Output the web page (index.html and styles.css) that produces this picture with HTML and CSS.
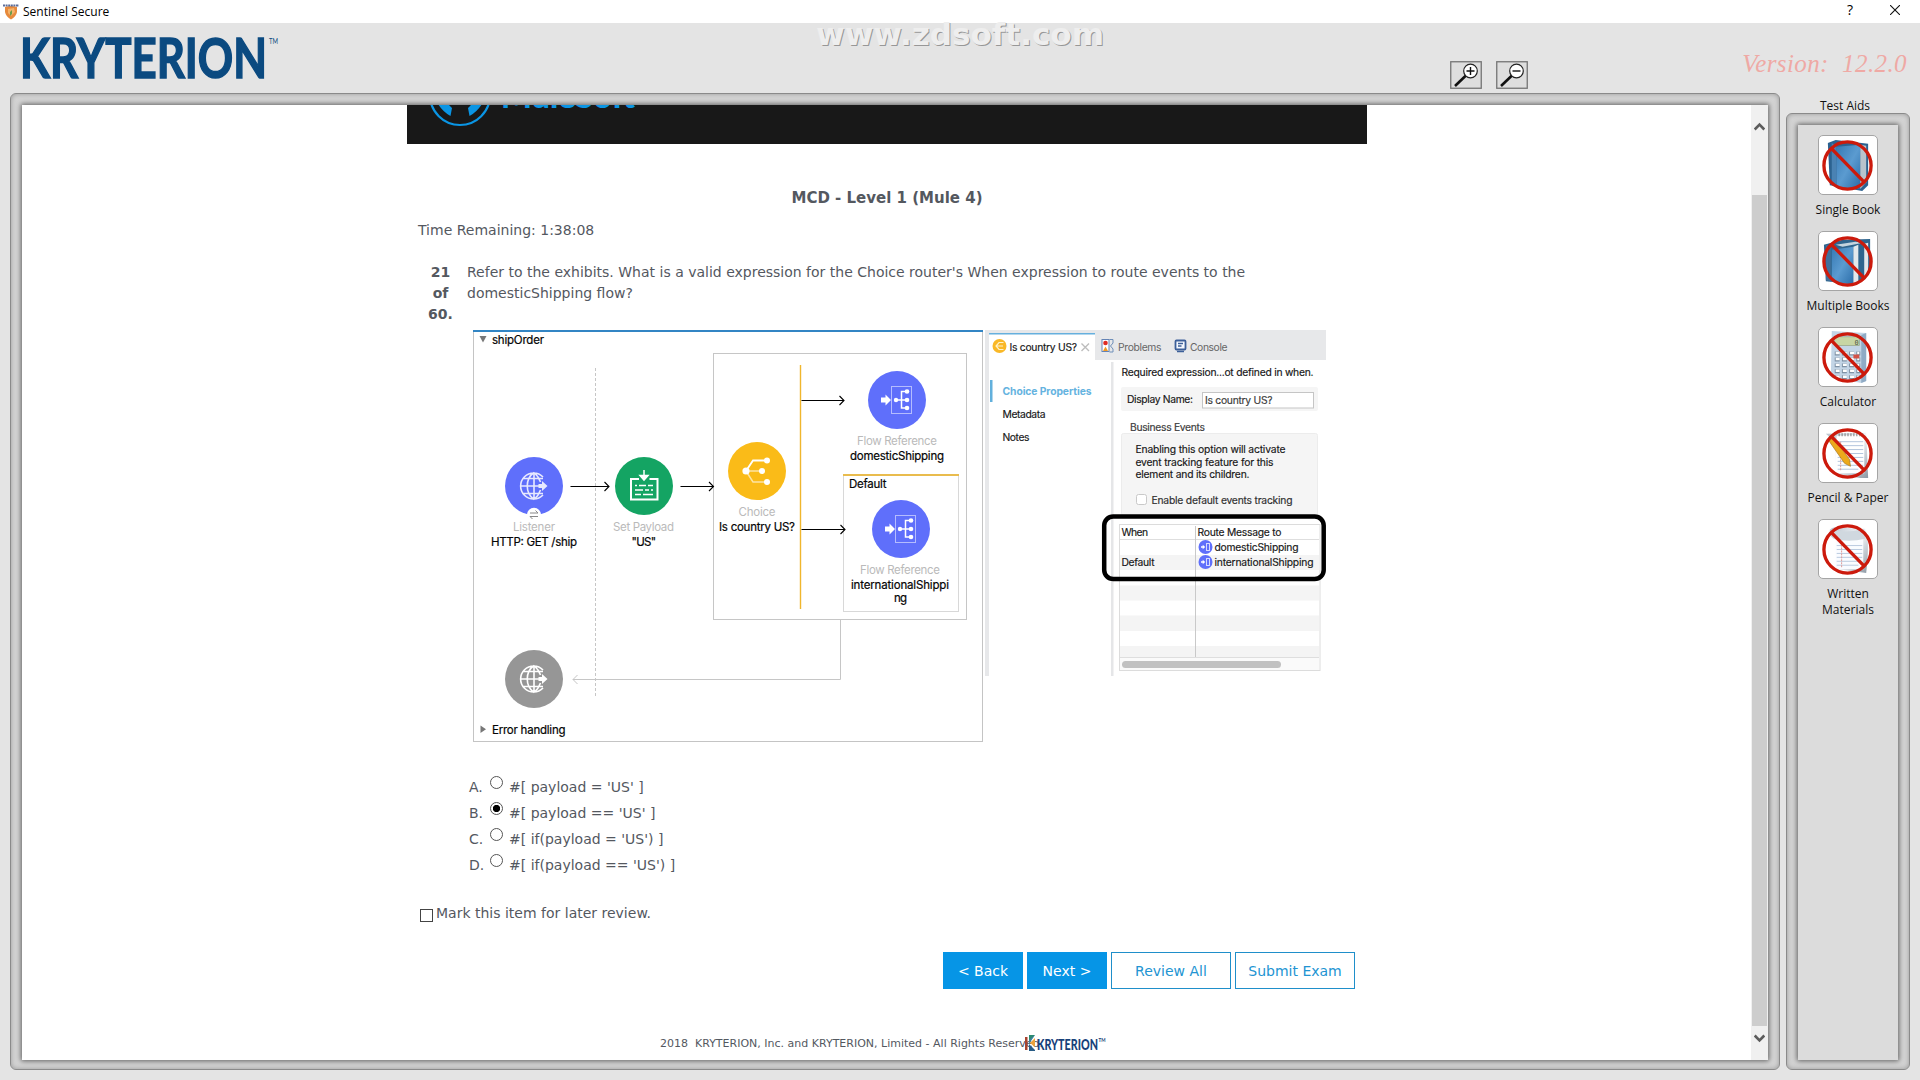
FILE: index.html
```html
<!DOCTYPE html>
<html lang="en">
<head>
<meta charset="utf-8">
<title>Sentinel Secure</title>
<link rel="stylesheet" href="styles.css">
</head>
<body>
<svg width="0" height="0" class="defs" aria-hidden="true">
  <defs>
    <linearGradient id="blue" x1="0" y1="0" x2="1" y2="1"><stop offset="0" stop-color="#3679b4"/><stop offset=".5" stop-color="#5b9bd0"/><stop offset="1" stop-color="#2a6ca8"/></linearGradient>
    <linearGradient id="paper" x1="0" y1="0" x2="1" y2="1"><stop offset="0" stop-color="#b9c3cd"/><stop offset=".5" stop-color="#f4f7fa"/><stop offset="1" stop-color="#8c98a3"/></linearGradient>
    <g id="ban" fill="none" stroke="#cc1a0c" stroke-width="3.4"><circle cx="29" cy="30" r="24"/><path d="M12 12L46.500 47.500"/></g>
    <g id="globe" fill="none" stroke="#fff" stroke-width="1.6">
      <path d="M10 -9A13 13 0 1 0 10 9M1 -13.500V13.500M-12.500 0H8M-10 -7.500H10M-10 7.500H10M1 -13.500C-8 -7 -8 7 1 13.500M1 -13.500C5 -10 6.500 -7 7.500 -4M1 13.500C5 10 6.500 7 7.500 4"/>
      <path d="M5.500 -2H9V-5L14.500 0L9 5V2H5.500Z" fill="#fff" stroke="none"/>
    </g>
    <g id="flowref">
      <circle r="29" fill="#5f6ffb"/>
      <path d="M-16 -2.500H-11.500V-5.500L-6 0L-11.500 5.500V2.500H-16Z" fill="#fff"/>
      <rect x="-5.500" y="-13.500" width="20" height="27" fill="none" stroke="#b4bcfe"/>
      <path d="M-1 0H10M10 -8.500H4.500V8H10" fill="none" stroke="#fff" stroke-width="1.500"/>
      <g fill="#fff"><circle cx="-1" r="2.200"/><circle cx="10" r="2.300"/><circle cx="10" cy="-8.500" r="2.300"/><circle cx="10" cy="8" r="2.300"/></g>
    </g>
    <g id="routeicon"><circle r="7" fill="#5f6ffb"/><path d="M-4.500 -.7H-2.800V-2.300L-.3 0L-2.800 2.300V.7H-4.500Z" fill="#fff"/><rect x="1" y="-3.500" width="3" height="7" fill="none" stroke="#d5d9ff"/></g>
    <path id="head" d="M-4.500 -4.500L0 0L-4.500 4.500" fill="none"/>
  </defs>
</svg>

<header class="titlebar">
  <svg class="shield" width="16" height="16" viewBox="0 0 16 16"><path d="M2 3Q8 1 14 3V8Q13 13 8 15.500Q3 13 2 8Z" fill="#e78a3c"/><path d="M5 5L11 4L12 8L8 12L5 9Z" fill="#f4b36a"/><path d="M7 8L9 6V10L7 12Z" fill="#6c9b4a"/><path d="M0 1.500H16" stroke="#5b6d99" stroke-width="2" stroke-dasharray="2 .6"/></svg>
  <span class="app-name">Sentinel Secure</span>
  <span class="help">?</span>
  <svg class="close" width="10" height="10" viewBox="0 0 10 10"><path d="M0 0L10 10M10 0L0 10" stroke="#111" stroke-width="1.100"/></svg>
</header>

<div class="brandbar">
  <svg class="brand" width="260" height="46" viewBox="0 0 260 46"><text x="-2" y="43" font-family="Lato, sans-serif" font-weight="700" font-size="55" textLength="247" lengthAdjust="spacingAndGlyphs" fill="#0b4a80" stroke="#0b4a80" stroke-width="1.500">KRYTERION</text><text x="247" y="8.500" font-family="Lato, sans-serif" font-size="7" textLength="9" lengthAdjust="spacingAndGlyphs" fill="#0b4a80">TM</text></svg>
  <svg class="watermark" width="300" height="40" viewBox="0 0 300 40"><g font-family="DejaVu Sans, sans-serif" font-weight="700" font-size="30"><text x="7" y="33" textLength="288" lengthAdjust="spacingAndGlyphs" fill="#979797">www.zdsoft.com</text><text x="6" y="32" textLength="288" lengthAdjust="spacingAndGlyphs" fill="#eeeeee">www.zdsoft.com</text></g></svg>
  <div class="zooms">
    <svg class="zoom" width="32" height="28" viewBox="0 0 32 28"><rect x=".75" y=".75" width="30.500" height="26.500" fill="#dedede" stroke="#747474" stroke-width="1.300"/><path d="M5 25L16.500 14" stroke="#111" stroke-width="2.600"/><circle cx="20.500" cy="10" r="6.800" fill="#fff" stroke="#222" stroke-width="1.200"/><path d="M16.500 10H24.500M20.500 6V14" stroke="#111" stroke-width="1.400"/></svg>
    <svg class="zoom" width="32" height="28" viewBox="0 0 32 28"><rect x=".75" y=".75" width="30.500" height="26.500" fill="#dedede" stroke="#747474" stroke-width="1.300"/><path d="M5 25L16.500 14" stroke="#111" stroke-width="2.600"/><circle cx="20.500" cy="10" r="6.800" fill="#fff" stroke="#222" stroke-width="1.200"/><path d="M16.500 10H24.500" stroke="#111" stroke-width="1.400"/></svg>
  </div>
  <div class="version">Version:&nbsp; 12.2.0</div>
</div>

<div class="workspace">
  <main class="frame exam">
    <div class="viewport">
      <div class="page">
        <div class="banner">
          <svg width="240" height="39" viewBox="407 105 240 39"><circle cx="460" cy="95" r="30" fill="none" stroke="#0a95e4" stroke-width="2.200"/><path d="M438 104Q443 112 450.500 116L452 108L447 103ZM482 104Q477 112 469.500 116L468 108L473 103Z" fill="#0a95e4"/><text x="501" y="108" font-family="Lato, sans-serif" font-weight="900" font-size="31" textLength="134" lengthAdjust="spacingAndGlyphs" fill="#0a95e4">MuleSoft</text></svg>
        </div>
        <h1 class="exam-title">MCD - Level 1 (Mule 4)</h1>
        <div class="timer">Time Remaining: 1:38:08</div>
        <section class="question">
          <div class="number">21<br>of<br>60.</div>
          <p class="prompt">Refer to the exhibits. What is a valid expression for the Choice router's When expression to route events to the domesticShipping flow?</p>
        </section>

        <svg class="exhibit" width="856" height="414" viewBox="472 330 856 414" font-family="Inter, sans-serif" font-size="11.500">
          <!-- shipOrder flow -->
          <rect x="473.500" y="331.500" width="509" height="411" fill="#fff" stroke="#c4c4c4"/>
          <rect x="473" y="331" width="510" height="2" fill="#3285c4"/>
          <path d="M479.500 337H486.500L483 343.500Z" fill="#777"/>
          <path d="M480.500 726.500V734L486 730.200Z" fill="#777"/>
          <path d="M595.500 369V698" stroke="#c6c6c6" stroke-dasharray="3 2"/>
          <rect x="713.500" y="354.500" width="253" height="266" fill="none" stroke="#c6c6c6"/>
          <path d="M840.500 621V680.500H573" fill="none" stroke="#c6c6c6"/>
          <path d="M577.500 676L573 680.500L577.500 685" fill="none" stroke="#c6c6c6"/>
          <path d="M800.500 366V610" stroke="#f0b62d" stroke-width="1.400"/>
          <rect x="843.500" y="475.500" width="115" height="137" fill="none" stroke="#d8d8d8"/>
          <rect x="843" y="475" width="116" height="2" fill="#e9bc4e"/>
          <g stroke="#000" stroke-width="1.100">
            <path d="M570.500 487.500H609M680.500 487.500H713.500M801.500 401.500H844M801.500 530.500H845"/>
            <use href="#head" x="609" y="487.500"/><use href="#head" x="713.500" y="487.500"/><use href="#head" x="844" y="401.500"/><use href="#head" x="845" y="530.500"/>
          </g>
          <circle cx="534" cy="487" r="29" fill="#5f6ffb"/><use href="#globe" x="533" y="487" opacity=".85"/>
          <circle cx="534" cy="516" r="7.200" fill="#fff"/><path d="M530 514H538L535.500 511.500M538 517.500H530L532.500 520" fill="none" stroke="#888"/>
          <circle cx="534" cy="680" r="29" fill="#969696"/><use href="#globe" x="533" y="680"/>
          <circle cx="644" cy="487" r="29" fill="#14a463"/>
          <path d="M639 480H631V500.500H657.500V480H649.500" fill="none" stroke="#fff" stroke-width="2"/>
          <path d="M644 471V478M640 476.500L644 481L648 476.500Z" fill="#fff" stroke="#fff" stroke-width="1.500"/>
          <path d="M635 486.500H637M639 486.500H646M648 486.500H653M635 491H643M645 491H649M651 491H653M635 495.500H641M643 495.500H653" stroke="#fff" stroke-width="1.600"/>
          <circle cx="757" cy="472" r="29" fill="#fabb18"/>
          <path d="M746 472L753 461.500H767" fill="none" stroke="#fff" stroke-width="1.800"/><path d="M746 472H762M746 472L753 483H767" fill="none" stroke="#fff" stroke-opacity=".6" stroke-width="1.500"/>
          <g fill="#fff"><circle cx="746" cy="472" r="3.600"/><circle cx="762" cy="472" r="3"/><circle cx="767" cy="461.500" r="3"/><circle cx="767" cy="483" r="3"/></g>
          <use href="#flowref" x="897" y="401"/><use href="#flowref" x="901" y="530"/>
          <g fill="#050505" stroke="#050505" stroke-width=".2" lengthAdjust="spacingAndGlyphs">
            <text x="492" y="345" textLength="52">shipOrder</text>
            <text x="492" y="735" textLength="73.500">Error handling</text>
            <text x="491" y="547" textLength="86">HTTP: GET /ship</text>
            <text x="631.500" y="547" textLength="24.500">"US"</text>
            <text x="719" y="532" textLength="76">Is country US?</text>
            <text x="850" y="461" textLength="94">domesticShipping</text>
            <text x="849" y="489" textLength="37.500">Default</text>
            <text x="851" y="590" textLength="98">internationalShippi</text>
            <text x="894" y="603" textLength="13">ng</text>
          </g>
          <g fill="#bababa">
            <text x="513" y="532" textLength="42">Listener</text>
            <text x="613" y="532" textLength="61">Set Payload</text>
            <text x="738.500" y="517" textLength="37">Choice</text>
            <text x="857" y="446" textLength="80">Flow Reference</text>
            <text x="860" y="575" textLength="80">Flow Reference</text>
          </g>
          <!-- properties panel -->
          <path d="M985 331H1326V361H989V677H985Z" fill="#e7e8ea"/>
          <rect x="989" y="334" width="106" height="28" fill="#fff"/><rect x="989" y="334" width="106" height="1.500" fill="#66b0de"/>
          <rect x="1111" y="363" width="2.500" height="314" fill="#e5e6e8"/>
          <circle cx="999.500" cy="347" r="7" fill="#f9b827"/><path d="M1003.500 343.500H999L996 347L999 350.500H1003.500M996 347H1003" fill="none" stroke="#fff2c9" stroke-width="1.200"/>
          <path d="M1081.500 344.500L1089 352M1089 344.500L1081.500 352" stroke="#bdbdbd" stroke-width="1.400"/>
          <rect x="1102" y="340.500" width="7" height="12" fill="#fff" stroke="#6483b5"/><path d="M1109.500 340.500H1113V344L1110.500 347L1113 350V353H1109.500" fill="none" stroke="#6f8fb9"/><circle cx="1105.500" cy="344" r="2.300" fill="#df2c24"/><path d="M1103 352L1105.500 347.500L1108 352Z" fill="#f29b25"/>
          <rect x="1175.500" y="341.500" width="10" height="9" rx="1" fill="#f4f8ff" stroke="#3c5f99" stroke-width="1.800"/><path d="M1178 344.500H1183M1178 347H1181.500M1177 352.500H1184" stroke="#3c5f99" stroke-width="1.300"/>
          <rect x="990" y="381" width="2.500" height="22" fill="#62b0dc"/>
          <rect x="1121" y="388" width="197" height="24" rx="2" fill="#f5f5f5"/>
          <rect x="1202.500" y="393.500" width="111" height="15.500" fill="#fff" stroke="#c5c5c5"/>
          <rect x="1121.500" y="434.500" width="196" height="82" rx="2" fill="#f5f5f5" stroke="#ececec"/>
          <rect x="1136.500" y="495.500" width="10" height="10" rx="2" fill="#fff" stroke="#c9c9c9"/>
          <rect x="1119.500" y="525.500" width="200.500" height="146" fill="#fff" stroke="#dcdcdc"/>
          <path d="M1120 556H1319V571H1120ZM1120 586.500H1319V601.500H1120ZM1120 616.500H1319V632H1120ZM1120 647H1319V658H1120Z" fill="#f4f4f4"/>
          <path d="M1120 658.500H1319M1120 540.500H1319" stroke="#dedede"/><path d="M1195.500 527V658" stroke="#c9c9c9"/>
          <rect x="1120" y="659" width="199" height="12" fill="#fafafa"/><rect x="1122" y="662" width="159" height="7" rx="3.500" fill="#c1c1c1"/>
          <use href="#routeicon" x="1205.500" y="548"/><use href="#routeicon" x="1205.500" y="563"/>
          <g font-size="10.300" fill="#151515" stroke="#151515" stroke-width=".15">
            <text x="1009.500" y="351.500" textLength="67.500">Is country US?</text>
            <text x="1121.500" y="376.500" textLength="192">Required expression...ot defined in when.</text>
            <text x="1002.500" y="419" textLength="43">Metadata</text>
            <text x="1002.500" y="442" textLength="27">Notes</text>
            <text x="1127" y="404" textLength="66">Display Name:</text>
            <text x="1205" y="405" textLength="67.500" fill="#444">Is country US?</text>
            <text x="1130" y="431.500" textLength="75" fill="#444">Business Events</text>
            <text x="1135.500" y="454" textLength="150">Enabling this option will activate</text>
            <text x="1135.500" y="466.500" textLength="138">event tracking feature for this</text>
            <text x="1135.500" y="479" textLength="114">element and its children.</text>
            <text x="1151.500" y="504.500" textLength="141" fill="#333">Enable default events tracking</text>
            <text x="1121.500" y="536.500" textLength="26.500">When</text>
            <text x="1197.500" y="536.500" textLength="84">Route Message to</text>
            <text x="1214.500" y="552" textLength="84">domesticShipping</text>
            <text x="1121.500" y="567" textLength="33">Default</text>
            <text x="1214.500" y="567" textLength="99">internationalShipping</text>
          </g>
          <g font-size="10.300" fill="#666"><text x="1118" y="351.500" textLength="43.500">Problems</text><text x="1190" y="351.500" textLength="37.500">Console</text></g>
          <text x="1002.500" y="396" font-size="10.300" font-weight="700" fill="#65b3df" textLength="89">Choice Properties</text>
          <rect x="1104.200" y="517.500" width="219.500" height="62.500" rx="9" fill="none" stroke="#000" stroke-width="4.500"/>
        </svg>

        <ul class="answers">
          <li><span class="letter">A.</span><span class="radio"></span>#[ payload = 'US' ]</li>
          <li><span class="letter">B.</span><span class="radio checked"></span>#[ payload == 'US' ]</li>
          <li><span class="letter">C.</span><span class="radio"></span>#[ if(payload = 'US') ]</li>
          <li><span class="letter">D.</span><span class="radio"></span>#[ if(payload == 'US') ]</li>
        </ul>
        <label class="review"><span class="checkbox"></span>Mark this item for later review.</label>
        <nav class="buttons">
          <a class="btn primary">&lt; Back</a>
          <a class="btn primary">Next &gt;</a>
          <a class="btn">Review All</a>
          <a class="btn">Submit Exam</a>
        </nav>
        <footer class="footer">
          <span class="year">2018</span><span class="legal">KRYTERION, Inc. and KRYTERION, Limited - All Rights Reserved.</span>
          <svg width="82" height="18" viewBox="0 0 82 18"><rect y="2" width="2.500" height="13" fill="#a8432f"/><path d="M4 0H10L4 7Z" fill="#2c8a70"/><path d="M10 0L4 9V5Z" fill="#3c7f9d"/><path d="M10 3V12L5 8Z" fill="#eda23c"/><path d="M4 9L10 15V16H4Z" fill="#285c85"/><text x="12" y="14.500" font-family="Lato, sans-serif" font-weight="900" font-size="15" textLength="61" lengthAdjust="spacingAndGlyphs" fill="#17417a">KRYTERION</text><text x="73.500" y="7" font-family="Lato, sans-serif" font-weight="700" font-size="6" textLength="7" lengthAdjust="spacingAndGlyphs" fill="#17417a">TM</text></svg>
        </footer>
      </div>
      <div class="scrollbar">
        <svg width="11" height="9" viewBox="0 0 11 9"><path d="M.7 7.500L5.500 2.700L10.300 7.500" fill="none" stroke="#5c5c5c" stroke-width="2.600"/></svg>
        <div class="thumb"></div>
        <svg width="11" height="9" viewBox="0 0 11 9"><path d="M.7 1.500L5.500 6.300L10.300 1.500" fill="none" stroke="#5c5c5c" stroke-width="2.600"/></svg>
      </div>
    </div>
  </main>

  <aside class="aids">
    <h2 class="aids-title">Test Aids</h2>
    <div class="frame aids-frame">
      <div class="aids-list">
        <div class="aid"><svg class="tile" viewBox="0 0 59 59"><path d="M9 7L17 4L50 8V50L44 56L11 50Z" fill="#2c6290"/><path d="M13 7V49L18 52V11Z" fill="#4a82b3"/><path d="M18 11L42 9V54L18 52Z" fill="url(#blue)"/><path d="M42 9L48 10V47L42 54Z" fill="#b8c3cc"/><use href="#ban"/></svg><span>Single Book</span></div>
        <div class="aid"><svg class="tile" viewBox="0 0 59 59"><path d="M5 13L24 8L52 7V40L45 49L33 53L7 50Z" fill="#2f658e"/><path d="M7 13L12 15V50L7 49Z" fill="#416f9a"/><path d="M13 18L35 15V54L13 50Z" fill="url(#blue)"/><path d="M35 15L40 13V50L35 54ZM46 12L50 11V42L46 47Z" fill="#e2e8ec"/><path d="M17 13L37 10L45 11L24 15Z" fill="#c5d4de"/><use href="#ban"/></svg><span>Multiple Books</span></div>
        <div class="aid"><svg class="tile" viewBox="0 0 59 59"><path d="M13 3L48 5V54L43 56L12 50Z" fill="#c3d5e6"/><path d="M43 7L48 5V54L43 56Z" fill="#8fabc5"/><rect x="16" y="9" width="25" height="9" fill="#c7d5a4" stroke="#8b9b82" stroke-width=".6"/><path d="M16 26H42M16 32H42M16 38H42M16 44H42M16 50H42" stroke="#7f92a5" stroke-width="4" stroke-dasharray="5 2.300"/><path d="M17 25.500H41M17 31.500H41M17 37.500H41M17 43.500H41M17 49.500H41" stroke="#fff" stroke-width="2.500" stroke-dasharray="4 3.300"/><rect x="35" y="27" width="6" height="4" fill="#d35247"/><text x="36" y="17" font-size="7" font-family="DejaVu Sans Mono" fill="#4c5848">0</text><use href="#ban"/></svg><span>Calculator</span></div>
        <div class="aid"><svg class="tile" viewBox="0 0 59 59"><path d="M7 10L48 9L50 55L42 55L17 51V19Z" fill="url(#paper)"/><path d="M18 12L46 11V50L16 50Z" fill="#fff"/><path d="M19 18H45M19 22H45M19 26H45M19 30H45M19 34H45M19 38H45M19 42H45M19 46H40" stroke="#b3c5dc" stroke-width="1"/><path d="M22 18V48" stroke="#dc9a98" stroke-dasharray="2 1"/><path d="M20 11H46" stroke="#777" stroke-width="3" stroke-dasharray="1 2"/><path d="M10 17L15 14L31 36L32 43L26 40Z" fill="#eca91c" stroke="#a9761b" stroke-width=".7"/><use href="#ban"/></svg><span>Pencil &amp; Paper</span></div>
        <div class="aid"><svg class="tile" viewBox="0 0 59 59"><path d="M11 10Q14 6 20 8L47 9Q52 20 48 54L20 50V20Q10 20 11 10Z" fill="url(#paper)"/><path d="M17 20L45 18V50L17 50Z" fill="#fafcff"/><path d="M12 10Q28 14 46 9L47 19Q30 23 15 19Z" fill="#d0d8df"/><path d="M18 26H44M18 30H44M18 34H44M18 38H44M18 42H44M18 46H40" stroke="#bacadf" stroke-width="1"/><path d="M23 22V49" stroke="#dc9a98" stroke-dasharray="2 1"/><use href="#ban"/></svg><span>Written<br>Materials</span></div>
      </div>
    </div>
  </aside>
</div>
</body>
</html>
```
FILE: styles.css
```css
* { box-sizing: border-box; }
body {
  margin: 0; width: 1920px; height: 1080px; overflow: hidden;
  display: flex; flex-direction: column;
  background: #e4e4e4; color: #54585f;
  font-family: "DejaVu Sans", Verdana, sans-serif; font-size: 14px;
}
svg { display: block; flex: none; }
.defs { position: absolute; }

.titlebar {
  height: 23px; flex: none; background: #fff; color: #000;
  display: flex; align-items: center; padding: 0 20px 0 3px;
  font: 12px/22px "Open Sans", sans-serif;
}
.app-name { margin-left: 4px; }
.help { margin-left: auto; margin-right: 37px; font-size: 14px; line-height: 18px; padding-bottom: 3px; }
.close { margin-bottom: 3px; }

.brandbar { height: 70px; flex: none; display: flex; align-items: flex-start; }
.brand { margin: 12px 0 0 22px; }
.watermark { margin: -10px 0 0 528px; }
.zooms { display: flex; gap: 14px; margin: 38px 0 0 340px; }
.version {
  margin: 26px 13px 0 auto; color: #efa9a4; white-space: nowrap;
  font: italic 25px/30px "Liberation Serif", serif; letter-spacing: .4px;
}

.workspace { flex: none; height: 977px; display: flex; padding-left: 10px; gap: 6px; }
.frame {
  border: 1px solid #8a8a8a; border-radius: 6px; background: #d4d4d4;
  box-shadow: inset 0 0 5px #999; padding: 11px 11px 9px;
}
.exam { width: 1770px; height: 977px; }
.viewport {
  height: 955px; background: #fff; display: flex;
  justify-content: space-between; box-shadow: 0 0 5px 1px #606060;
}
.page { width: 960px; margin-left: 385px; display: flex; flex-direction: column; overflow: hidden; }
.banner { height: 39px; flex: none; background: #181818; overflow: hidden; }
.exam-title { margin: 43px 0 0; text-align: center; font-size: 15px; line-height: 22px; font-weight: 700; }
.timer { margin: 11px 0 0 11px; line-height: 21px; }
.question { display: flex; margin-top: 21px; line-height: 21px; }
.number { width: 67px; margin-right: -7px; text-align: center; font-weight: 700; }
.prompt { margin: 0; width: 810px; }
.exhibit { margin: -6px 0 0 65px; margin-top: 4px; }

.answers { list-style: none; margin: 31px 0 0 62px; padding: 0; }
.answers li { display: flex; height: 26px; line-height: 26px; white-space: pre; }
.letter { width: 21px; }
.radio { width: 13px; height: 13px; margin: 2px 6px 0 0; border: 1px solid #555; border-radius: 50%; background: #fff; }
.checked { background: radial-gradient(circle, #000 0 3.3px, #fff 4px); }
.review { display: flex; margin: 25px 0 0 13px; line-height: 21px; }
.checkbox { width: 13px; height: 13px; margin: 6px 3px 0 0; border: 1px solid #444; }
.buttons { display: flex; gap: 4px; margin: 28px 0 0 536px; }
.btn { width: 120px; height: 37px; border: 1px solid #1f8fca; color: #2294d2; text-align: center; line-height: 37px; }
.primary { width: 80px; background: #0695e6; border-color: #0695e6; color: #fff; }
.footer { display: flex; margin: 46px 0 0 253px; font-size: 11px; line-height: 18px; white-space: nowrap; }
.year { width: 35px; }
.legal { width: 330px; }

.scrollbar { width: 17px; background: #f0f0f0; display: flex; flex-direction: column; align-items: center; padding: 17px 0; }
.thumb { width: 15px; height: 831px; margin: 64px 0 8px; background: #cdcdcd; flex: none; }

.aids { width: 124px; height: 977px; display: flex; flex-direction: column; color: #111; font: 12px/16px "Open Sans", sans-serif; }
.aids-title { margin: 0; height: 20px; padding: 5px 6px 0 0; text-align: center; font: inherit; }
.aids-frame { height: 957px; }
.aids-list { height: 935px; background: #dcdcdc; box-shadow: 0 0 5px 1px #606060; padding-top: 10px; display: flex; flex-direction: column; align-items: center; }
.aid { height: 96px; display: flex; flex-direction: column; align-items: center; gap: 7px; text-align: center; white-space: nowrap; }
.tile { width: 60px; height: 60px; background: #fff; border: 1px solid #a5a5a5; border-radius: 5px; }
```
